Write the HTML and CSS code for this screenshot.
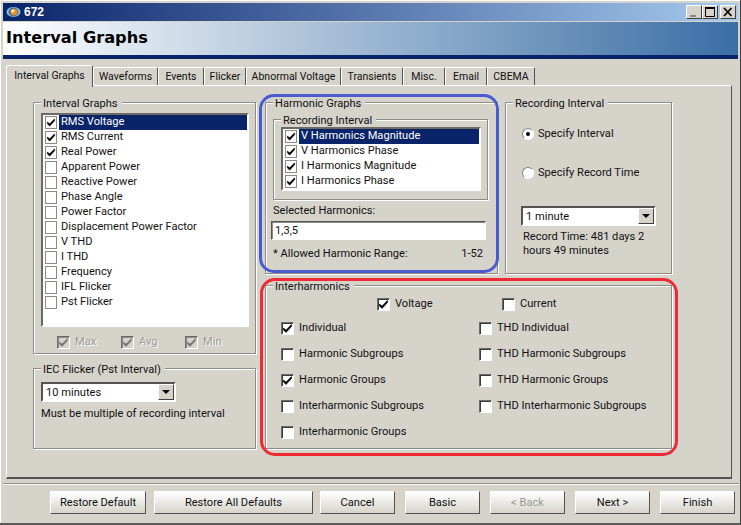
FILE: index.html
```html
<!DOCTYPE html>
<html lang="en">
<head>
<meta charset="utf-8">
<title>672</title>
<link rel="stylesheet" href="styles.css">
</head>
<body>
<svg class="defs" width="0" height="0" aria-hidden="true"><defs>
  <symbol id="tick" viewBox="0 0 11 11"><path d="M1.5 5 L1.5 7 L4 9.5 L9.5 3.5 L9.5 1.5 L4 7 Z" fill="currentColor" stroke="currentColor" stroke-width=".6"/></symbol>
</defs></svg>
<div class="window">
  <div class="titlebar">
    <svg class="appicon" width="15" height="12" viewBox="0 0 15 12"><ellipse cx="7.5" cy="6" rx="7" ry="5" fill="#8fc0e0"/><ellipse cx="7.5" cy="6" rx="5" ry="4.4" fill="#2a6db0"/><circle cx="8" cy="6" r="3.6" fill="#ef8a1d"/><circle cx="6.8" cy="5" r="1.6" fill="#fff3c8"/></svg>
    <span class="titletext">672</span>
    <div class="winbtns">
      <span class="winbtn"><svg width="14" height="12" viewBox="0 0 14 12"><rect x="3" y="9" width="6" height="2" fill="#8a8880"/></svg></span>
      <span class="winbtn"><svg width="14" height="12" viewBox="0 0 14 12"><path d="M2.5 2.5 H11.5 V10.5 H2.5 Z" fill="none" stroke="#000"/><rect x="2" y="1" width="10" height="2"/></svg></span>
      <span class="winbtn close"><svg width="14" height="12" viewBox="0 0 14 12"><path d="M3 2 L10.5 10 M10.5 2 L3 10" stroke="#000" stroke-width="1.7"/></svg></span>
    </div>
  </div>
  <div class="banner"><h1>Interval Graphs</h1></div>
  <div class="tabs">
    <span class="tab active">Interval Graphs</span>
    <span class="tab">Waveforms</span>
    <span class="tab">Events</span>
    <span class="tab">Flicker</span>
    <span class="tab">Abnormal Voltage</span>
    <span class="tab">Transients</span>
    <span class="tab">Misc.</span>
    <span class="tab">Email</span>
    <span class="tab">CBEMA</span>
  </div>
  <div class="pane">
    <div class="leftcol">
      <section class="group g-interval">
        <span class="legend">Interval Graphs</span>
        <div class="listbox lb-interval">
          <div class="li"><span class="cb flat"><svg><use href="#tick"/></svg></span><span class="lt sel">RMS Voltage</span></div>
          <div class="li"><span class="cb flat"><svg><use href="#tick"/></svg></span><span class="lt">RMS Current</span></div>
          <div class="li"><span class="cb flat"><svg><use href="#tick"/></svg></span><span class="lt">Real Power</span></div>
          <div class="li"><span class="cb flat"></span><span class="lt">Apparent Power</span></div>
          <div class="li"><span class="cb flat"></span><span class="lt">Reactive Power</span></div>
          <div class="li"><span class="cb flat"></span><span class="lt">Phase Angle</span></div>
          <div class="li"><span class="cb flat"></span><span class="lt">Power Factor</span></div>
          <div class="li"><span class="cb flat"></span><span class="lt">Displacement Power Factor</span></div>
          <div class="li"><span class="cb flat"></span><span class="lt">V THD</span></div>
          <div class="li"><span class="cb flat"></span><span class="lt">I THD</span></div>
          <div class="li"><span class="cb flat"></span><span class="lt">Frequency</span></div>
          <div class="li"><span class="cb flat"></span><span class="lt">IFL Flicker</span></div>
          <div class="li"><span class="cb flat"></span><span class="lt">Pst Flicker</span></div>
        </div>
        <div class="stats">
          <label class="chk off"><span class="cb disabled"><svg><use href="#tick"/></svg></span>Max</label>
          <label class="chk off"><span class="cb disabled"><svg><use href="#tick"/></svg></span>Avg</label>
          <label class="chk off"><span class="cb disabled"><svg><use href="#tick"/></svg></span>Min</label>
        </div>
      </section>
      <section class="group g-iec">
        <span class="legend">IEC Flicker (Pst Interval)</span>
        <div class="combo c-iec"><span class="combotext">10 minutes</span><span class="arrow"></span></div>
        <p class="note">Must be multiple of recording interval</p>
      </section>
    </div>

    <section class="group g-harm">
      <span class="legend">Harmonic Graphs</span>
      <div class="group g-recint">
        <span class="legend">Recording Interval</span>
        <div class="listbox lb-harm">
          <div class="li"><span class="cb flat"><svg><use href="#tick"/></svg></span><span class="lt sel">V Harmonics Magnitude</span></div>
          <div class="li"><span class="cb flat"><svg><use href="#tick"/></svg></span><span class="lt">V Harmonics Phase</span></div>
          <div class="li"><span class="cb flat"><svg><use href="#tick"/></svg></span><span class="lt">I Harmonics Magnitude</span></div>
          <div class="li"><span class="cb flat"><svg><use href="#tick"/></svg></span><span class="lt">I Harmonics Phase</span></div>
        </div>
      </div>
      <div class="sel-label">Selected Harmonics:</div>
      <div class="textinput">1,3,5</div>
      <div class="allowed"><span>* Allowed Harmonic Range:</span><span>1-52</span></div>
    </section>

    <section class="group g-rec">
      <span class="legend">Recording Interval</span>
      <label class="radio r-first"><span class="rd on"></span>Specify Interval</label>
      <label class="radio r-second"><span class="rd"></span>Specify Record Time</label>
      <div class="combo c-rec"><span class="combotext">1 minute</span><span class="arrow"></span></div>
      <p class="rectime">Record Time: 481 days 2<br>hours 49 minutes</p>
    </section>

    <section class="group g-inter">
      <span class="legend">Interharmonics</span>
      <div class="vc">
        <label class="chk vc-v"><span class="cb"><svg><use href="#tick"/></svg></span>Voltage</label>
        <label class="chk"><span class="cb"></span>Current</label>
      </div>
      <div class="intergrid">
        <label class="chk"><span class="cb"><svg><use href="#tick"/></svg></span>Individual</label>
        <label class="chk"><span class="cb"></span>THD Individual</label>
        <label class="chk"><span class="cb"></span>Harmonic Subgroups</label>
        <label class="chk"><span class="cb"></span>THD Harmonic Subgroups</label>
        <label class="chk"><span class="cb"><svg><use href="#tick"/></svg></span>Harmonic Groups</label>
        <label class="chk"><span class="cb"></span>THD Harmonic Groups</label>
        <label class="chk"><span class="cb"></span>Interharmonic Subgroups</label>
        <label class="chk"><span class="cb"></span>THD Interharmonic Subgroups</label>
        <label class="chk"><span class="cb"></span>Interharmonic Groups</label>
      </div>
    </section>

    <div class="ring ring-blue"></div>
    <div class="ring ring-red"></div>
  </div>
  <div class="footer">
    <button class="btn b-rd">Restore Default</button>
    <button class="btn b-rad">Restore All Defaults</button>
    <button class="btn b-cancel">Cancel</button>
    <button class="btn b-std b-basic">Basic</button>
    <button class="btn b-std b-back" disabled>&lt; Back</button>
    <button class="btn b-std b-next">Next &gt;</button>
    <button class="btn b-std b-finish">Finish</button>
  </div>
</div>
</body>
</html>
```
FILE: styles.css
```css
* { box-sizing: border-box; }
html, body { margin: 0; padding: 0; }
body { width: 741px; height: 525px; overflow: hidden; font: 11.1px/14px Roboto, "Liberation Sans", sans-serif; color: #111; background: #d6d3cb; }
.defs { position: absolute; }
p { margin: 0; }

.window { width: 741px; height: 525px; display: flex; flex-direction: column; padding: 3px 2px 0 3px; background: #d6d3cb; border-right: 1px solid #404040; border-bottom: 2px solid #5a5a58; box-shadow: inset 1px 1px 0 #fff; }

.titlebar { height: 18px; display: flex; align-items: center; padding-left: 3px; background: linear-gradient(90deg, #0a246a, #a6caf0); flex: none; }
.appicon { flex: none; }
.titletext { margin-left: 3px; font: bold 12px/14px "Liberation Sans", sans-serif; color: #fff; }
.winbtns { margin-left: auto; display: flex; padding-right: 2px; }
.winbtn { width: 16px; height: 14px; background: #d6d3cb; border: 1px solid; border-color: #fff #404040 #404040 #fff; display: flex; overflow: hidden; }
.winbtn svg { flex: none; }
.winbtn.close { margin-left: 2px; }

.banner { height: 37px; margin-top: 1px; flex: none; background: linear-gradient(90deg, #fff, #3a6ea5); border-bottom: 4px solid #0a246a; display: flex; align-items: center; padding: 0 0 2px 3px; }
.banner h1 { margin: 0; font: bold 16.2px/20px "DejaVu Sans", sans-serif; color: #000; }

.tabs { display: grid; grid-template-columns: 87px 65px 46px 42px 95px 62px 42px 42px 48px; justify-content: start; margin: 6px 0 0 3px; height: 20px; flex: none; position: relative; z-index: 1; font-size: 10.5px; }
.tab { height: 18px; margin-top: 2px; text-align: center; line-height: 17px; border: 1px solid; border-color: #fff #55534f transparent #fff; border-bottom: 0; border-radius: 2px 2px 0 0; background: #d6d3cb; }
.tab.active { height: 22px; margin-top: 0; line-height: 19px; background: #d6d3cb; }

.pane { position: relative; width: 726px; height: 394px; margin-left: 3px; flex: none; display: grid; grid-template-columns: 225px 233px 167px; grid-template-rows: 172px 164px; column-gap: 7px; row-gap: 11px; align-content: start; padding: 16px 0 0 26px; border: 1px solid; border-color: #fff #55534f #55534f #fff; border-bottom-width: 2px; }
.leftcol { grid-row: 1 / 3; display: flex; flex-direction: column; gap: 14px; padding-right: 2px; }

.group { border: 1px solid #8f8d87; box-shadow: 1px 1px 0 #fff, inset 1px 1px 0 #fff; }
.legend { display: block; width: fit-content; margin: -6px 0 0 7px; padding: 0 4px 0 2px; background: #d6d3cb; }

.g-interval { height: 253px; }
.g-iec { height: 81px; }
.g-harm { height: 172px; }
.g-rec { height: 172px; }
.g-inter { grid-column: 2 / 4; height: 164px; }

.listbox { background: #fff; border: 2px solid; border-color: #6c6a66 #fff #fff #6c6a66; }
.lb-interval { width: 208px; height: 214px; margin: 2px 0 0 7px; }
.lb-harm { width: 200px; height: 64px; margin: -1px 0 0 7px; }
.g-recint { width: 215px; height: 81px; margin: 8px 0 0 7px; }
.li { height: 15px; display: flex; align-items: center; padding-left: 2px; }
.lt { flex: 1; height: 15px; padding-left: 2px; line-height: 14px; margin-left: 2px; }
.sel { background: #0a246a; color: #fff; }

.cb { width: 13px; height: 13px; flex: none; background: #fff; color: #000; border: 1px solid; border-color: #6c6a66 #fff #fff #6c6a66; box-shadow: inset 1px 1px 0 #3c3c3a; display: block; }
.cb svg { width: 11px; height: 11px; display: block; }
.cb.flat { width: 12px; height: 13px; border: 1px solid #8c8a84; box-shadow: none; }
.cb.flat svg { width: 10px; height: 11px; }
.cb.disabled { background: #d6d3cb; color: #77756f; box-shadow: inset 1px 1px 0 #8c8a84; }

.chk { display: flex; align-items: center; gap: 5px; height: 14px; white-space: nowrap; }
.chk.off { color: #9c9a94; text-shadow: 1px 1px 0 #fff; width: 64px; }

.stats { display: flex; margin: 8px 0 0 23px; }

.combo { display: flex; align-items: center; height: 20px; background: #fff; border: 2px solid; border-color: #55534f #fff #fff #55534f; width: 135px; }
.combotext { flex: 1; padding: 1px 0 0 3px; }
.arrow { width: 16px; height: 16px; background: #d6d3cb; border: 1px solid; border-color: #fff #404040 #404040 #fff; position: relative; flex: none; }
.arrow::after { content: ""; position: absolute; left: 3px; top: 5px; border: 4px solid transparent; border-top: 4px solid #000; border-bottom: 0; }
.c-iec { margin: 5px 0 0 7px; }
.note { margin: 5px 0 0 7px; }

.sel-label { margin: 4px 0 0 7px; }
.textinput { width: 215px; height: 19px; margin: 3px 0 0 5px; background: #fff; border: 1px solid; border-color: #55534f #fff #fff #55534f; padding-left: 3px; line-height: 18px; box-shadow: inset 1px 1px 0 #8c8a84; }
.allowed { display: flex; justify-content: space-between; width: 210px; margin: 7px 0 0 7px; }

.radio { display: flex; align-items: center; gap: 4px; height: 14px; margin-left: 16px; }
.r-first { margin-top: 16px; }
.r-second { margin-top: 25px; }
.rd { width: 12px; height: 12px; flex: none; border-radius: 50%; border: 1px solid #85837d; border-right-color: #fff; border-bottom-color: #fff; background: #fff; box-shadow: 0 0 0 .5px #d6d3cb; display: flex; align-items: center; justify-content: center; }
.rd.on::after { content: ""; width: 4px; height: 4px; border-radius: 50%; background: #000; }
.c-rec { margin: 26px 0 0 15px; }
.rectime { margin: 4px 0 0 17px; line-height: 14px; }

.vc { display: flex; margin: 3px 0 0 111px; }
.vc-v { width: 125px; }
.intergrid { display: grid; grid-template-columns: 198px 1fr; grid-auto-rows: 14px; row-gap: 12px; margin: 10px 0 0 15px; }

.ring { position: absolute; pointer-events: none; border: 3px solid; border-radius: 15px; }
.ring-blue { left: 252px; top: 8px; width: 240px; height: 179px; border-color: #4a5bd0; }
.ring-red { left: 253px; top: 192px; width: 418px; height: 178px; border-color: #ee2a35; }

.footer { flex: 1; margin: 4px -1px 0 0; border-top: 1px solid #8f8d87; box-shadow: inset 0 1px 0 #fff; display: flex; padding: 7px 0 0 47px; align-items: flex-start; }
.btn { height: 23px; padding: 0; font: inherit; color: #111; background: linear-gradient(#fff, #d6d3cb); border: 1px solid; border-color: #fff #55534f #55534f #fff; border-radius: 0; }
.btn:disabled { color: #9c9a94; }
.b-rd { width: 96px; }
.b-rad { width: 159px; margin-left: 8px; }
.b-cancel { width: 75px; margin-left: 7px; }
.b-std { width: 75px; margin-left: 10px; }
```
